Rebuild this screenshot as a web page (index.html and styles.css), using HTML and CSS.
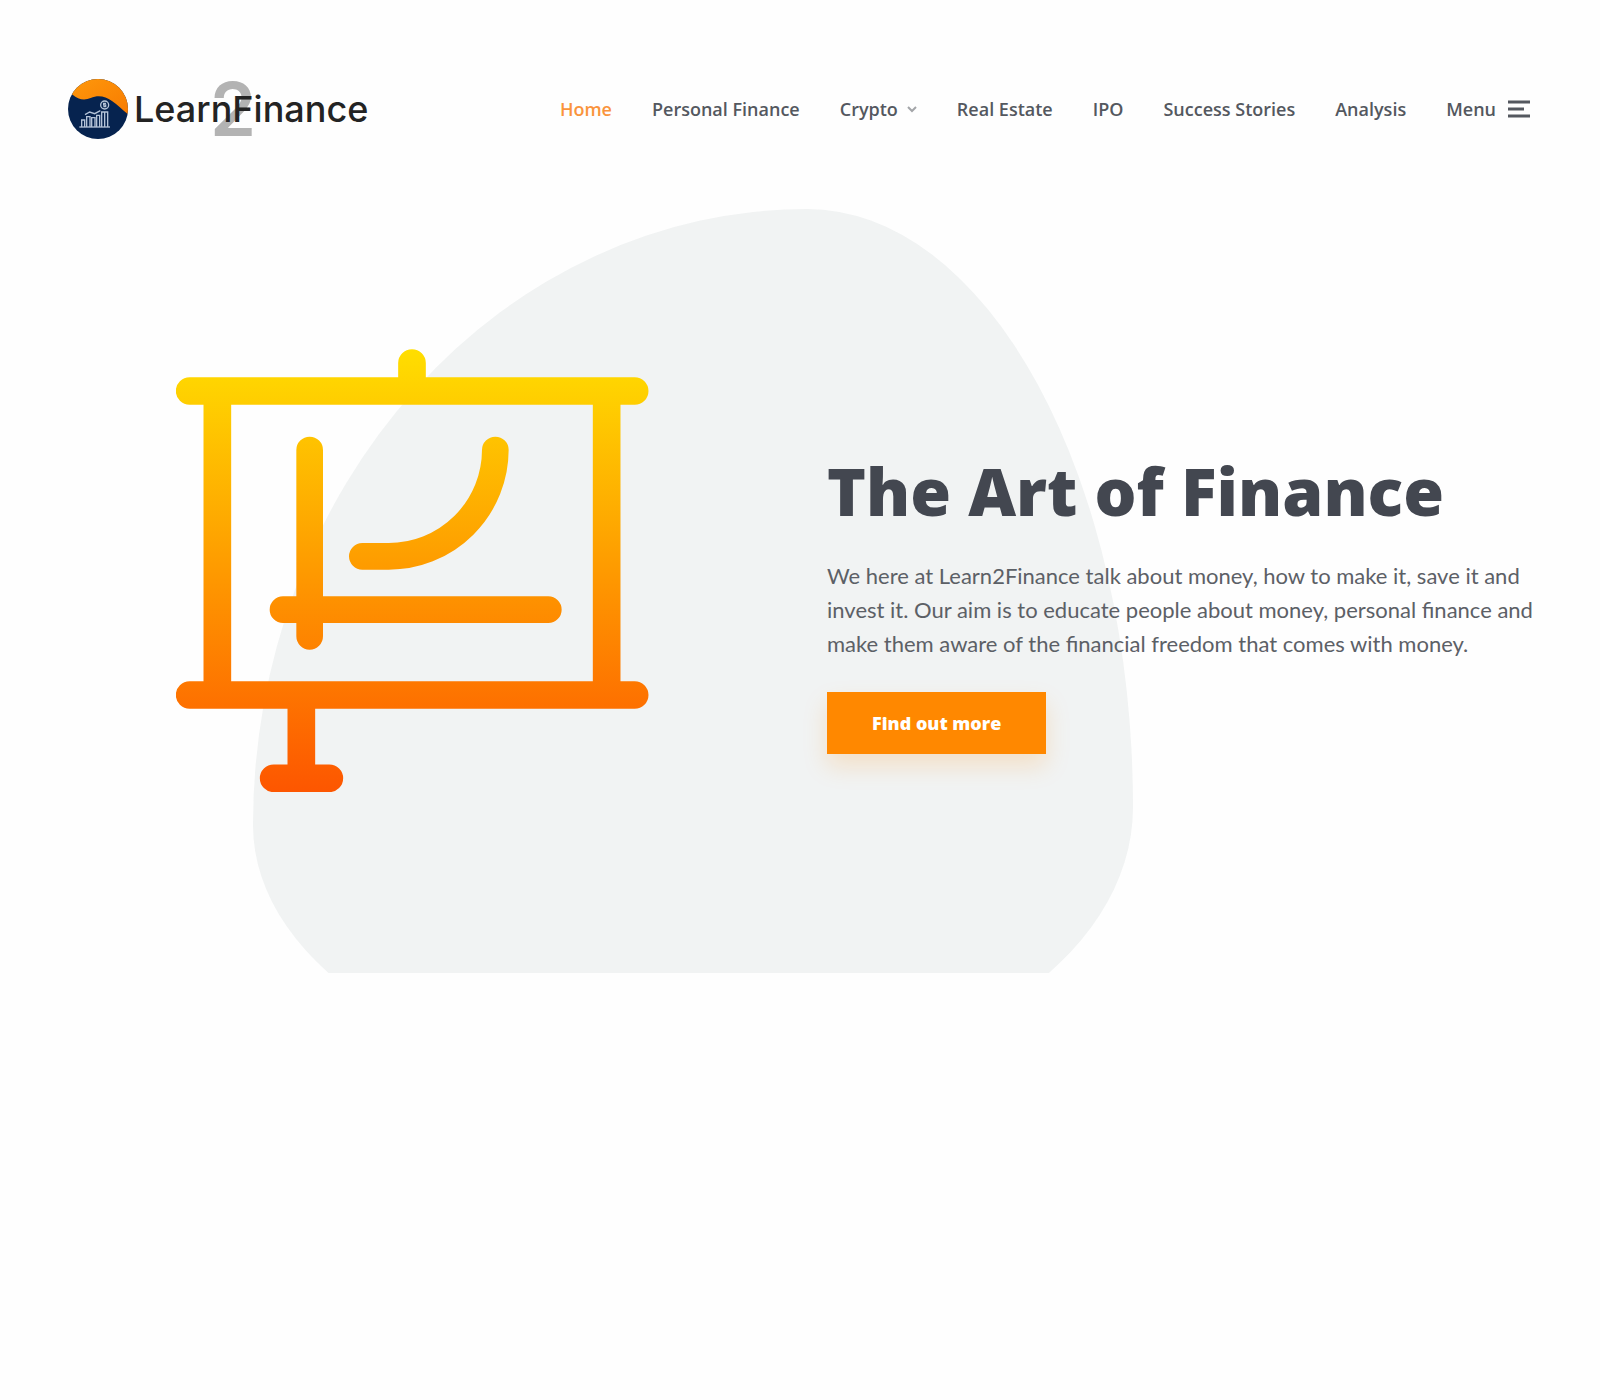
FILE: index.html
```html
<!DOCTYPE html>
<html lang="en">
<head>
<meta charset="utf-8">
<meta name="viewport" content="width=device-width, initial-scale=1">
<title>Learn2Finance</title>
<link rel="stylesheet" href="styles.css">
</head>
<body>
<header class="header">
  <a class="logo" href="#">
    <svg class="logo-mark" viewBox="52 55 180 180" aria-hidden="true">
      <defs>
        <clipPath id="disc"><circle cx="142" cy="145" r="90"/></clipPath>
        <linearGradient id="wave" x1="0" y1="0" x2="1" y2="1">
          <stop offset="0" stop-color="#ff9a0c"/>
          <stop offset="1" stop-color="#f77a00"/>
        </linearGradient>
      </defs>
      <g clip-path="url(#disc)">
        <rect x="52" y="55" width="180" height="180" fill="#06234f"/>
        <path d="M45 90 L66 102 C82 117 102 120 120 112 C142 102 164 106 184 121 C202 134 216 148 236 164 V50 H45 Z" fill="url(#wave)"/>
      </g>
      <g fill="none" stroke="#b4c3d8" stroke-width="4">
        <path d="M86 199 H178"/>
        <path d="M93 199 V178 H102 V199 M108 199 V168 H118 V199 M123 199 V171 H133 V199 M138 199 V164 H147 V199 M153 199 V154 H171 V199 M162 154 V199"/>
        <path d="M103 162 L117 154 L132 159 L149 150"/>
        <circle cx="162" cy="133" r="12"/>
        <path d="M166 128 H159 V133 H165 V138 H158"/>
      </g>
    </svg>
    <span class="logo-name"><span class="logo-learn">Learn</span><span class="logo-two">2</span><span class="logo-finance">Finance</span></span>
  </a>
  <nav class="nav" aria-label="Main">
    <a class="nav-link nav-link-current" href="#">Home</a>
    <a class="nav-link" href="#">Personal Finance</a>
    <a class="nav-link" href="#">Crypto
      <svg class="chevron" viewBox="0 0 10 8" aria-hidden="true"><path d="M1 2 L5 6 L9 2"/></svg>
    </a>
    <a class="nav-link" href="#">Real Estate</a>
    <a class="nav-link" href="#">IPO</a>
    <a class="nav-link" href="#">Success Stories</a>
    <a class="nav-link" href="#">Analysis</a>
    <button class="menu" type="button">Menu
      <svg class="burger" viewBox="0 0 22 18" aria-hidden="true"><path d="M0 2 H22 M0 9 H16 M0 16 H22"/></svg>
    </button>
  </nav>
</header>
<main class="hero">
  <div class="blob"></div>
  <svg class="board" viewBox="45 57 1418 1330" role="img" aria-label="Presentation board with a rising chart">
    <defs>
      <linearGradient id="heat" gradientUnits="userSpaceOnUse" x1="0" y1="57" x2="0" y2="1387">
        <stop offset="0" stop-color="#ffde00"/>
        <stop offset="1" stop-color="#fd5600"/>
      </linearGradient>
    </defs>
    <g fill="none" stroke="url(#heat)" stroke-linecap="round">
      <path stroke-width="83" d="M753 99 V183 M86 183 H1421 M169 183 V1095 M1337 183 V1095 M86 1095 H1421 M421 1095 V1345 M338 1345 H505"/>
      <path stroke-width="80" d="M446 360 V919 M366 839 H1162 M604 679 H683 A320 320 0 0 0 1003 360"/>
    </g>
  </svg>
  <section class="pitch">
    <h1 class="title">The Art of Finance</h1>
    <p class="lead">We here at Learn2Finance talk about money, how to make it, save it and invest it. Our aim is to educate people about money, personal finance and make them aware of the financial freedom that comes with money.</p>
    <a class="cta" href="#">Find out more</a>
  </section>
</main>
</body>
</html>
```
FILE: styles.css
```css
* {
  box-sizing: border-box;
}

body {
  margin: 0;
  background: #fefefe;
  color: #5c6066;
  font-family: "Open Sans", "Noto Sans", sans-serif;
}

.header {
  display: flex;
  align-items: center;
  justify-content: space-between;
  padding: 79px 70px 70px 68px;
}

.logo {
  display: flex;
  align-items: center;
  gap: 6px;
  color: #232323;
  text-decoration: none;
}

.logo-mark {
  width: 60px;
  height: 60px;
}

.logo-name {
  position: relative;
  display: flex;
  font: 500 36px/60px Inter, sans-serif;
}

.logo-learn,
.logo-finance {
  position: relative;
  z-index: 1;
}

/* The large numeral sits behind the seam of the two words. */
.logo-two {
  position: absolute;
  top: 0;
  left: 76px;
  color: #b3b3b3;
  font: 600 74px/60px Inter, sans-serif;
}

.nav {
  display: flex;
  align-items: center;
  gap: 40px;
}

.nav-link,
.menu {
  display: flex;
  align-items: center;
  color: #54585f;
  font: 600 18px/24px "Open Sans", sans-serif;
  text-decoration: none;
  white-space: nowrap;
}

.nav-link {
  gap: 9px;
}

.nav-link-current {
  color: #fa943c;
}

.menu {
  gap: 12px;
  padding: 0;
  border: 0;
  background: none;
  cursor: pointer;
}

.chevron {
  width: 10px;
  height: 8px;
  fill: none;
  stroke: #a3a5a8;
  stroke-width: 2;
}

.burger {
  width: 22px;
  height: 18px;
  fill: none;
  stroke: #54585f;
  stroke-width: 3;
}

.hero {
  position: relative;
  display: grid;
  grid-template-columns: 49fr 51fr;
  gap: 72px;
  align-items: start;
  padding: 140px 60px 181px 70px;
  overflow: hidden;
}

.blob {
  position: absolute;
  z-index: -1;
  top: 0;
  left: 253px;
  width: 55%;
  aspect-ratio: 1;
  border-radius: 63% 37% 50% 50% / 70% 68% 32% 30%;
  background: #f1f3f3;
}

.board {
  width: 69%;
  justify-self: center;
}

.pitch {
  padding-top: 101px;
}

.title {
  margin: 0 0 29px;
  color: #434750;
  font-size: 66px;
  font-weight: 800;
  line-height: 80px;
}

.lead {
  margin: 0 0 31px;
  font: 400 22px/34px Lato, sans-serif;
}

.cta {
  display: inline-block;
  padding: 19px 45px;
  background: #ff8800;
  box-shadow: 0 12px 24px rgba(255, 136, 0, 0.18);
  color: #fff;
  font-size: 18px;
  font-weight: 800;
  line-height: 24px;
  text-decoration: none;
}
```
